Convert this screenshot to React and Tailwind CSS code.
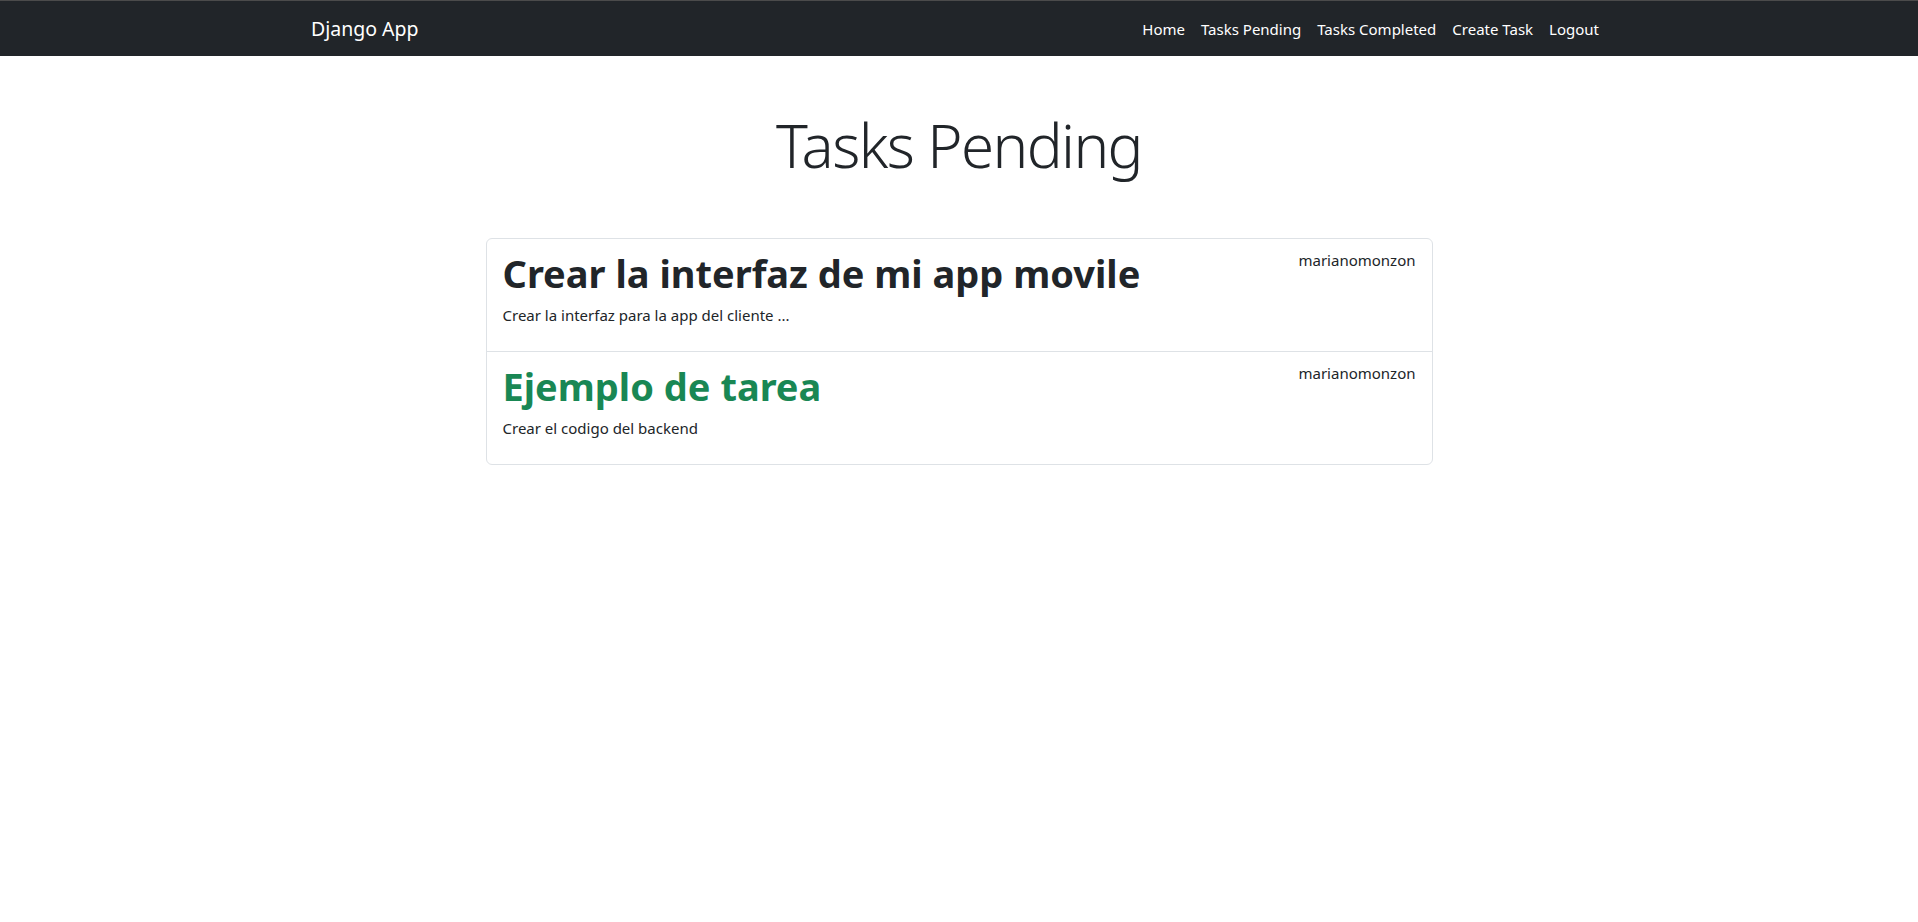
export default function App() {
  const links = ["Home", "Tasks Pending", "Tasks Completed", "Create Task", "Logout"];
  const tasks = [
    { title: "Crear la interfaz de mi app movile", desc: "Crear la interfaz para la app del cliente ...", user: "marianomonzon", green: false },
    { title: "Ejemplo de tarea", desc: "Crear el codigo del backend", user: "marianomonzon", green: true },
  ];
  return (
    <div className="min-h-[922px] bg-white text-[#212529] font-['Noto_Sans',sans-serif]">
      <nav className="h-14 bg-[#212529] border-t border-[#4b4b4b]">
        <div className="w-[1296px] mx-auto h-full flex items-center justify-between">
          <span className="text-white text-[19.5px] leading-[30px]">Django App</span>
          <ul className="flex">
            {links.map((l) => (
              <li key={l} className="px-2 py-2 text-white text-[15px] leading-6">{l}</li>
            ))}
          </ul>
        </div>
      </nav>
      <main>
        <h1 className="mt-[51px] text-center text-[60px] leading-[77px] tracking-[-1.6px] font-light">Tasks Pending</h1>
        <div className="mt-[54px] w-[947px] mx-auto border border-[#dee2e6] rounded-md">
          {tasks.map((t, i) => (
            <div key={i} className={"px-4 py-2 " + (i > 0 ? "border-t border-[#dee2e6]" : "")}>
              <div className="flex justify-between">
                <h2 className={"text-[38px] leading-[48px] pt-[2px] mb-[6px] font-bold " + (t.green ? "text-[#198754]" : "text-[#212529]")}>{t.title}</h2>
                <span className="text-[15px] leading-6 pt-[1px]">{t.user}</span>
              </div>
              <p className="text-[15px] leading-6 mb-4">{t.desc}</p>
            </div>
          ))}
        </div>
      </main>
    </div>
  );
}
